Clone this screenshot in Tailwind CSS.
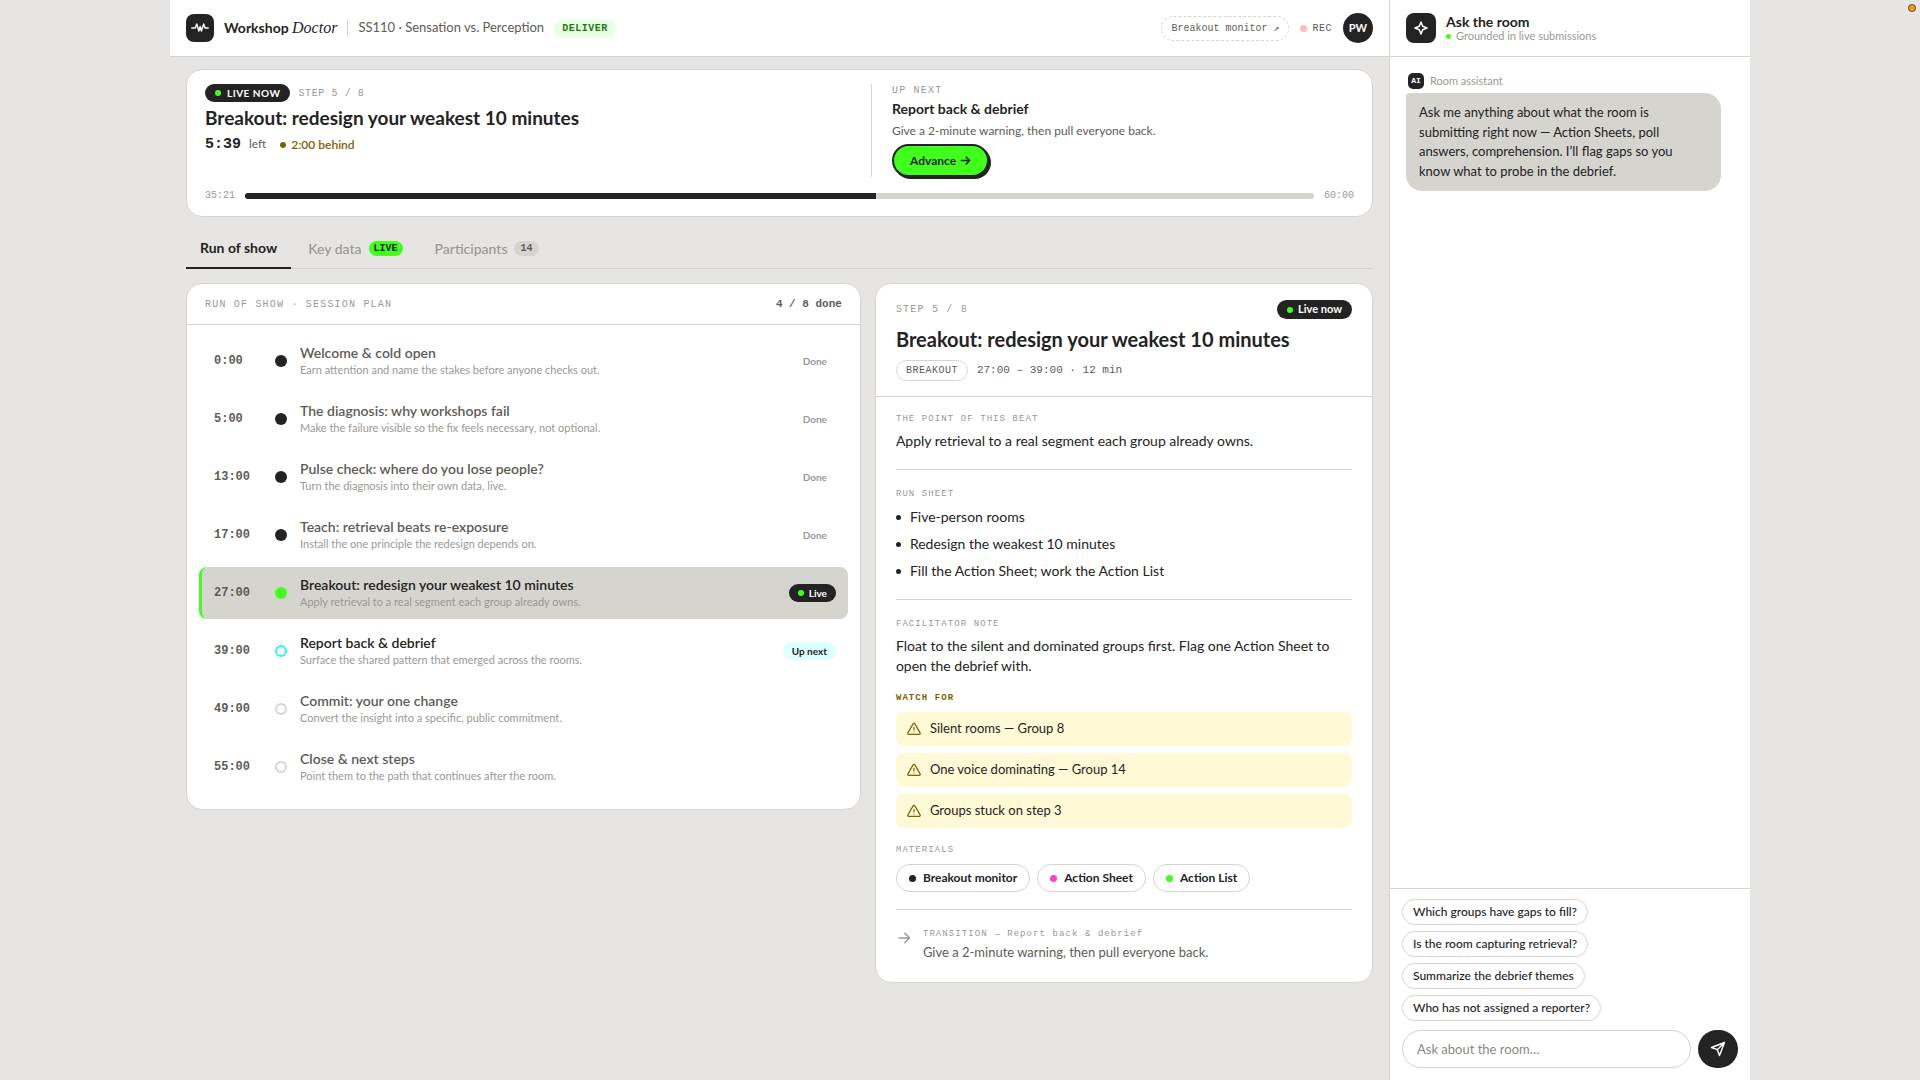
<!DOCTYPE html>
<html lang="en">
<head>
    <meta charset="UTF-8">
    <meta name="viewport" content="width=device-width, initial-scale=1.0">
    <title>Workshop Doctor - SS110 Sensation vs. Perception</title>
    <script src="https://cdn.jsdelivr.net/npm/@tailwindcss/browser@4"></script>
</head>
<body class="bg-[#e6e5e3] text-[#232323] font-['Lato','Liberation_Sans',sans-serif]">
    <!-- Session status light -->
    <span class="fixed top-1 right-1 size-2 rounded-full bg-[#f90] border border-[#5c4a2a]"></span>

    <div class="mx-auto flex h-screen max-w-[1580px]">
        <!-- Main column -->
        <div class="flex min-w-0 flex-1 flex-col border-r border-[#d5d4cf]">
            <header class="flex h-[57px] shrink-0 items-center gap-[10px] border-b border-[#d5d4cf] bg-white px-4">
                <span class="flex size-7 items-center justify-center rounded-lg bg-[#232323] text-white">
                    <svg class="size-[18px]" viewBox="0 0 18 18" fill="none" stroke="currentColor" stroke-width="1.4" stroke-linecap="round" stroke-linejoin="round">
                        <path d="M.8 9h3.400L5.800 5l2 7L9.200 7.500l1.200 4.500 2.300-7L14 9h3.200"></path>
                    </svg>
                </span>
                <span class="text-sm font-bold">Workshop <em class="font-['Liberation_Serif',serif] text-base font-normal">Doctor</em></span>
                <span class="h-[18px] w-px bg-[#d5d4cf]"></span>
                <span class="text-[13px] text-[#5e5b57]">SS110 · Sensation vs. Perception</span>
                <span class="rounded-full bg-[#e8ffe4] px-2 font-['Liberation_Mono',monospace] text-[10px] leading-[19px] font-bold tracking-wider text-[#1f7a14]">DELIVER</span>
                <div class="ml-auto flex items-center gap-[11px]">
                    <a href="#" class="rounded-full border border-dashed border-[#d5d4cf] px-[9px] font-['Liberation_Mono',monospace] text-[10px] leading-[23px] text-[#5e5b57]">Breakout monitor ↗</a>
                    <span class="flex items-center gap-[5px] font-['Liberation_Mono',monospace] text-[10px] tracking-wider text-[#5e5b57]">
                        <span class="size-[7px] rounded-full bg-[#ffbcbc]"></span>REC
                    </span>
                    <span class="flex size-[30px] items-center justify-center rounded-full bg-[#232323] text-[11px] font-bold text-white">PW</span>
                </div>
            </header>

            <main class="flex-1 px-4 py-3">
                <!-- Now / next -->
                <section class="rounded-2xl border border-[#d5d4cf] bg-white px-[18px] pt-[14px] pb-[13px]">
                    <div class="grid grid-cols-[1fr_483px]">
                        <div>
                            <div class="flex items-center gap-2">
                                <span class="flex h-[18px] items-center gap-[6px] rounded-full bg-[#232323] px-[10px] text-[10px] font-bold tracking-wider text-white"><span class="size-[6px] rounded-full bg-[#41ff1c]"></span>LIVE NOW</span>
                                <span class="font-['Liberation_Mono',monospace] text-[10px] tracking-[0.06em] text-[#9a9894]">STEP 5 / 8</span>
                            </div>
                            <h1 class="mt-1 text-[19px] leading-6 font-bold">Breakout: redesign your weakest 10 minutes</h1>
                            <div class="mt-1 flex items-baseline gap-2">
                                <span class="font-['Liberation_Mono',monospace] text-[15px] font-bold">5:39</span>
                                <span class="text-xs text-[#5e5b57]">left</span>
                                <span class="ml-[6px] flex items-center gap-[5px] text-xs font-semibold text-[#7a6200]"><span class="size-[6px] rounded-full bg-[#7a6200]"></span>2:00 behind</span>
                            </div>
                        </div>
                        <div class="border-l border-[#d5d4cf] pl-5">
                            <p class="font-['Liberation_Mono',monospace] text-[10px] leading-[13px] tracking-[0.12em] text-[#9a9894]">UP NEXT</p>
                            <h2 class="mt-[3px] text-sm leading-[18px] font-bold">Report back &amp; debrief</h2>
                            <p class="mt-1 text-xs leading-[18px] text-[#5e5b57]">Give a 2-minute warning, then pull everyone back.</p>
                            <button type="button" class="mt-1 flex h-[33px] items-center gap-1 rounded-full border-2 border-[#232323] bg-[#41ff1c] px-4 text-xs font-bold shadow-[2px_2px_0_#232323]">Advance
                                <svg class="size-[11px]" viewBox="0 0 12 12" fill="none" stroke="currentColor" stroke-width="1.600" stroke-linecap="round" stroke-linejoin="round"><path d="M1.500 6h9M6.800 2.300 10.500 6 6.800 9.700"></path></svg>
                            </button>
                        </div>
                    </div>
                    <div class="mt-3 flex items-center gap-[10px] font-['Liberation_Mono',monospace] text-[10px] leading-[14px] text-[#9a9894]">
                        <span>35:21</span>
                        <div class="h-[6px] flex-1 overflow-hidden rounded-full bg-[#d5d4cf]">
                            <div class="h-full bg-[#232323]" style="width: 59%"></div>
                        </div>
                        <span>60:00</span>
                    </div>
                </section>

                <nav class="mt-3 flex h-10 gap-[2px] border-b border-[#d5d4cf] text-sm text-[#9a9894]">
                    <button type="button" class="-mb-px h-10 border-b-2 border-[#232323] px-[14px] font-bold text-[#232323]">Run of show</button>
                    <button type="button" class="flex items-center gap-[7px] px-[15px] font-medium">Key data <span class="rounded-full bg-[#41ff1c] px-[5px] font-['Liberation_Mono',monospace] text-[10px] leading-[15px] font-bold text-[#232323]">LIVE</span></button>
                    <button type="button" class="flex items-center gap-[7px] px-[15px] font-medium">Participants <span class="rounded-full bg-[#d5d4cf] px-[6px] font-['Liberation_Mono',monospace] text-[10px] leading-[15px] font-bold text-[#5e5b57]">14</span></button>
                </nav>

                <div class="mt-[14px] grid grid-cols-[1.355fr_1fr] items-start gap-[14px]">
                    <!-- Session plan -->
                    <section class="rounded-2xl border border-[#d5d4cf] bg-white">
                        <div class="flex h-[41px] items-center justify-between border-b border-[#d5d4cf] px-[18px] font-['Liberation_Mono',monospace]">
                            <h2 class="text-[10px] tracking-[0.12em] text-[#9a9894]">RUN OF SHOW · SESSION PLAN</h2>
                            <span class="text-[11px] font-bold text-[#5e5b57]">4 / 8 done</span>
                        </div>
                        <ol class="px-3 py-[10px]">
                            <li class="mb-[6px] grid h-[52px] grid-cols-[48px_14px_1fr_auto] items-center gap-3 rounded-lg border-l-3 border-transparent px-3">
                                <span class="font-['Liberation_Mono',monospace] text-xs font-bold text-[#5e5b57]">0:00</span>
                                <span class="mx-auto size-3 rounded-full bg-[#232323]"></span>
                                <div>
                                    <h3 class="text-sm leading-[18px] font-semibold text-[#5e5b57]">Welcome &amp; cold open</h3>
                                    <p class="text-[11px] leading-4 text-[#9a9894]">Earn attention and name the stakes before anyone checks out.</p>
                                </div>
                                <span class="px-[9px] text-[10px] font-bold text-[#9a9894]">Done</span>
                            </li>
                            <li class="mb-[6px] grid h-[52px] grid-cols-[48px_14px_1fr_auto] items-center gap-3 rounded-lg border-l-3 border-transparent px-3">
                                <span class="font-['Liberation_Mono',monospace] text-xs font-bold text-[#5e5b57]">5:00</span>
                                <span class="mx-auto size-3 rounded-full bg-[#232323]"></span>
                                <div>
                                    <h3 class="text-sm leading-[18px] font-semibold text-[#5e5b57]">The diagnosis: why workshops fail</h3>
                                    <p class="text-[11px] leading-4 text-[#9a9894]">Make the failure visible so the fix feels necessary, not optional.</p>
                                </div>
                                <span class="px-[9px] text-[10px] font-bold text-[#9a9894]">Done</span>
                            </li>
                            <li class="mb-[6px] grid h-[52px] grid-cols-[48px_14px_1fr_auto] items-center gap-3 rounded-lg border-l-3 border-transparent px-3">
                                <span class="font-['Liberation_Mono',monospace] text-xs font-bold text-[#5e5b57]">13:00</span>
                                <span class="mx-auto size-3 rounded-full bg-[#232323]"></span>
                                <div>
                                    <h3 class="text-sm leading-[18px] font-semibold text-[#5e5b57]">Pulse check: where do you lose people?</h3>
                                    <p class="text-[11px] leading-4 text-[#9a9894]">Turn the diagnosis into their own data, live.</p>
                                </div>
                                <span class="px-[9px] text-[10px] font-bold text-[#9a9894]">Done</span>
                            </li>
                            <li class="mb-[6px] grid h-[52px] grid-cols-[48px_14px_1fr_auto] items-center gap-3 rounded-lg border-l-3 border-transparent px-3">
                                <span class="font-['Liberation_Mono',monospace] text-xs font-bold text-[#5e5b57]">17:00</span>
                                <span class="mx-auto size-3 rounded-full bg-[#232323]"></span>
                                <div>
                                    <h3 class="text-sm leading-[18px] font-semibold text-[#5e5b57]">Teach: retrieval beats re-exposure</h3>
                                    <p class="text-[11px] leading-4 text-[#9a9894]">Install the one principle the redesign depends on.</p>
                                </div>
                                <span class="px-[9px] text-[10px] font-bold text-[#9a9894]">Done</span>
                            </li>
                            <li class="mb-[6px] grid h-[52px] grid-cols-[48px_14px_1fr_auto] items-center gap-3 rounded-lg border-l-3 border-[#41ff1c] bg-[#d5d4cf] px-3">
                                <span class="font-['Liberation_Mono',monospace] text-xs font-bold text-[#5e5b57]">27:00</span>
                                <span class="mx-auto size-3 rounded-full bg-[#41ff1c]"></span>
                                <div>
                                    <h3 class="text-sm leading-[18px] font-semibold">Breakout: redesign your weakest 10 minutes</h3>
                                    <p class="text-[11px] leading-4 text-[#9a9894]">Apply retrieval to a real segment each group already owns.</p>
                                </div>
                                <span class="flex h-[18px] items-center gap-[5px] rounded-full bg-[#232323] px-[9px] text-[10px] font-bold text-white"><span class="size-[6px] rounded-full bg-[#41ff1c]"></span>Live</span>
                            </li>
                            <li class="mb-[6px] grid h-[52px] grid-cols-[48px_14px_1fr_auto] items-center gap-3 rounded-lg border-l-3 border-transparent px-3">
                                <span class="font-['Liberation_Mono',monospace] text-xs font-bold text-[#5e5b57]">39:00</span>
                                <span class="mx-auto size-3 rounded-full border-2 border-[#1cffff]"></span>
                                <div>
                                    <h3 class="text-sm leading-[18px] font-semibold">Report back &amp; debrief</h3>
                                    <p class="text-[11px] leading-4 text-[#9a9894]">Surface the shared pattern that emerged across the rooms.</p>
                                </div>
                                <span class="rounded-full bg-[#dcffff] px-[9px] text-[10px] leading-[18px] font-bold">Up next</span>
                            </li>
                            <li class="mb-[6px] grid h-[52px] grid-cols-[48px_14px_1fr_auto] items-center gap-3 rounded-lg border-l-3 border-transparent px-3">
                                <span class="font-['Liberation_Mono',monospace] text-xs font-bold text-[#5e5b57]">49:00</span>
                                <span class="mx-auto size-3 rounded-full border-2 border-[#d5d4cf]"></span>
                                <div>
                                    <h3 class="text-sm leading-[18px] font-semibold text-[#5e5b57]">Commit: your one change</h3>
                                    <p class="text-[11px] leading-4 text-[#9a9894]">Convert the insight into a specific, public commitment.</p>
                                </div>
                            </li>
                            <li class="mb-[6px] grid h-[52px] grid-cols-[48px_14px_1fr_auto] items-center gap-3 rounded-lg border-l-3 border-transparent px-3">
                                <span class="font-['Liberation_Mono',monospace] text-xs font-bold text-[#5e5b57]">55:00</span>
                                <span class="mx-auto size-3 rounded-full border-2 border-[#d5d4cf]"></span>
                                <div>
                                    <h3 class="text-sm leading-[18px] font-semibold text-[#5e5b57]">Close &amp; next steps</h3>
                                    <p class="text-[11px] leading-4 text-[#9a9894]">Point them to the path that continues after the room.</p>
                                </div>
                            </li>
                        </ol>
                    </section>

                    <!-- Step detail -->
                    <article class="rounded-2xl border border-[#d5d4cf] bg-white">
                        <div class="border-b border-[#d5d4cf] px-5 pt-4 pb-[15px]">
                            <div class="flex items-center justify-between">
                                <span class="font-['Liberation_Mono',monospace] text-[10px] tracking-[0.12em] text-[#9a9894]">STEP 5 / 8</span>
                                <span class="flex h-[19px] items-center gap-[5px] rounded-full bg-[#232323] px-[10px] text-[11px] font-bold text-white"><span class="size-[6px] rounded-full bg-[#41ff1c]"></span>Live now</span>
                            </div>
                            <h2 class="mt-[7px] text-xl leading-[26px] font-bold">Breakout: redesign your weakest 10 minutes</h2>
                            <div class="mt-2 flex items-center gap-[9px] font-['Liberation_Mono',monospace] text-[#5e5b57]">
                                <span class="rounded-full border border-[#d5d4cf] px-[9px] text-[10px] leading-[19px] tracking-wider">BREAKOUT</span>
                                <span class="text-[11px]">27:00 – 39:00 · 12 min</span>
                            </div>
                        </div>
                        <div class="px-5 pt-4 pb-5">
                            <h3 class="font-['Liberation_Mono',monospace] text-[9px] leading-3 tracking-[0.12em] text-[#9a9894]">THE POINT OF THIS BEAT</h3>
                            <p class="mt-[6px] text-sm leading-5">Apply retrieval to a real segment each group already owns.</p>

                            <h3 class="mt-[18px] border-t border-[#d5d4cf] pt-[18px] font-['Liberation_Mono',monospace] text-[9px] leading-3 tracking-[0.12em] text-[#9a9894]">RUN SHEET</h3>
                            <ul class="mt-[7px] space-y-[7px] text-sm leading-5">
                                <li class="flex items-center gap-[9px]"><span class="size-[5px] rounded-full bg-[#232323]"></span>Five-person rooms</li>
                                <li class="flex items-center gap-[9px]"><span class="size-[5px] rounded-full bg-[#232323]"></span>Redesign the weakest 10 minutes</li>
                                <li class="flex items-center gap-[9px]"><span class="size-[5px] rounded-full bg-[#232323]"></span>Fill the Action Sheet; work the Action List</li>
                            </ul>

                            <h3 class="mt-[18px] border-t border-[#d5d4cf] pt-[18px] font-['Liberation_Mono',monospace] text-[9px] leading-3 tracking-[0.12em] text-[#9a9894]">FACILITATOR NOTE</h3>
                            <p class="mt-[6px] text-sm leading-5">Float to the silent and dominated groups first. Flag one Action Sheet to open the debrief with.</p>

                            <h3 class="mt-4 font-['Liberation_Mono',monospace] text-[9px] leading-3 font-bold tracking-[0.12em] text-[#7a6200]">WATCH FOR</h3>
                            <ul class="mt-2 space-y-[7px] text-[13px] text-[#232323]">
                                <li class="flex h-[34px] items-center gap-[9px] rounded-lg bg-[#fff9d6] px-[11px]">
                                    <svg class="size-[14px] text-[#7a6200]" viewBox="0 0 14 14" fill="none" stroke="currentColor" stroke-width="1.200" stroke-linecap="round" stroke-linejoin="round"><path d="M6.100 1.900.9 10.900a1 1 0 0 0 .9 1.500h10.400a1 1 0 0 0 .9-1.500L7.900 1.900a1 1 0 0 0-1.800 0zM7 5.300v2.600M7 10v.1"></path></svg>
                                    Silent rooms — Group 8
                                </li>
                                <li class="flex h-[34px] items-center gap-[9px] rounded-lg bg-[#fff9d6] px-[11px]">
                                    <svg class="size-[14px] text-[#7a6200]" viewBox="0 0 14 14" fill="none" stroke="currentColor" stroke-width="1.200" stroke-linecap="round" stroke-linejoin="round"><path d="M6.100 1.900.9 10.900a1 1 0 0 0 .9 1.500h10.400a1 1 0 0 0 .9-1.500L7.900 1.900a1 1 0 0 0-1.800 0zM7 5.300v2.600M7 10v.1"></path></svg>
                                    One voice dominating — Group 14
                                </li>
                                <li class="flex h-[34px] items-center gap-[9px] rounded-lg bg-[#fff9d6] px-[11px]">
                                    <svg class="size-[14px] text-[#7a6200]" viewBox="0 0 14 14" fill="none" stroke="currentColor" stroke-width="1.200" stroke-linecap="round" stroke-linejoin="round"><path d="M6.100 1.900.9 10.900a1 1 0 0 0 .9 1.500h10.400a1 1 0 0 0 .9-1.500L7.900 1.900a1 1 0 0 0-1.800 0zM7 5.300v2.600M7 10v.1"></path></svg>
                                    Groups stuck on step 3
                                </li>
                            </ul>

                            <h3 class="mt-4 font-['Liberation_Mono',monospace] text-[9px] leading-3 tracking-[0.12em] text-[#9a9894]">MATERIALS</h3>
                            <div class="mt-2 flex flex-wrap gap-[7px] text-xs font-bold">
                                <a href="#" class="flex h-7 items-center gap-[7px] rounded-full border border-[#d5d4cf] px-3"><span class="size-[7px] rounded-full bg-[#232323]"></span>Breakout monitor</a>
                                <a href="#" class="flex h-7 items-center gap-[7px] rounded-full border border-[#d5d4cf] px-3"><span class="size-[7px] rounded-full bg-[#ff3fd0]"></span>Action Sheet</a>
                                <a href="#" class="flex h-7 items-center gap-[7px] rounded-full border border-[#d5d4cf] px-3"><span class="size-[7px] rounded-full bg-[#41ff1c]"></span>Action List</a>
                            </div>

                            <div class="mt-[17px] flex gap-[11px] border-t border-[#d5d4cf] pt-[18px]">
                                <svg class="mt-[2px] size-4 shrink-0 text-[#9a9894]" viewBox="0 0 16 16" fill="none" stroke="currentColor" stroke-width="1.500" stroke-linecap="round" stroke-linejoin="round"><path d="M3 8h10.500M8.800 3.300 13.500 8l-4.700 4.700"></path></svg>
                                <div>
                                    <h3 class="font-['Liberation_Mono',monospace] text-[9px] leading-3 tracking-[0.12em] text-[#9a9894]">TRANSITION → Report back &amp; debrief</h3>
                                    <p class="mt-[2px] text-[13px] leading-5 text-[#5e5b57]">Give a 2-minute warning, then pull everyone back.</p>
                                </div>
                            </div>
                        </div>
                    </article>
                </div>
            </main>
        </div>

        <!-- Room assistant -->
        <aside class="flex w-[360px] shrink-0 flex-col bg-white">
            <header class="flex h-[57px] shrink-0 items-center gap-[10px] border-b border-[#d5d4cf] px-4">
                <span class="flex size-[30px] items-center justify-center rounded-lg bg-[#232323] text-white">
                    <svg class="size-4" viewBox="0 0 16 16" fill="none" stroke="currentColor" stroke-width="1.500" stroke-linejoin="round"><path d="M8 2 9.700 6.300 14 8 9.700 9.700 8 14 6.300 9.700 2 8l4.300-1.700z"></path></svg>
                </span>
                <div>
                    <h2 class="text-sm leading-4 font-bold">Ask the room</h2>
                    <p class="flex items-center gap-[5px] text-[11px] leading-3 text-[#9a9894]"><span class="size-[5px] rounded-full bg-[#41ff1c]"></span>Grounded in live submissions</p>
                </div>
            </header>

            <div class="flex-1 overflow-y-auto p-4">
                <div class="flex items-center gap-[6px] px-[2px] text-[11px] leading-4 text-[#9a9894]">
                    <span class="flex size-4 items-center justify-center rounded-[5px] bg-[#232323] font-['Liberation_Mono',monospace] text-[8px] font-bold text-white">AI</span>
                    Room assistant
                </div>
                <p class="mt-1 max-w-[315px] rounded-2xl rounded-tl-sm bg-[#d5d4cf] py-[10px] pr-5 pl-[13px] text-[13px] leading-normal">Ask me anything about what the room is submitting right now — Action Sheets, poll answers, comprehension. I’ll flag gaps so you know what to probe in the debrief.</p>
            </div>

            <div class="border-t border-[#d5d4cf] px-3 pt-[10px] pb-3">
                <div class="flex flex-col items-start gap-[6px] text-xs font-medium">
                    <button type="button" class="h-[26px] rounded-full border border-[#d5d4cf] px-[10px]">Which groups have gaps to fill?</button>
                    <button type="button" class="h-[26px] rounded-full border border-[#d5d4cf] px-[10px]">Is the room capturing retrieval?</button>
                    <button type="button" class="h-[26px] rounded-full border border-[#d5d4cf] px-[10px]">Summarize the debrief themes</button>
                    <button type="button" class="h-[26px] rounded-full border border-[#d5d4cf] px-[10px]">Who has not assigned a reporter?</button>
                </div>
                <form class="mt-[9px] flex gap-[7px]">
                    <input type="text" aria-label="Ask about the room" placeholder="Ask about the room…" class="h-[38px] min-w-0 flex-1 rounded-full border border-[#d5d4cf] px-[14px] text-[13px] placeholder:text-[#8a8885]">
                    <button type="submit" aria-label="Send" class="flex h-[38px] w-10 items-center justify-center rounded-full bg-[#232323] text-white">
                        <svg class="size-4" viewBox="0 0 16 16" fill="none" stroke="currentColor" stroke-width="1.400" stroke-linecap="round" stroke-linejoin="round"><path d="M14.500 1.500 1.500 6.500l5.800 2.200L9.500 14.500zM14.500 1.500 7.300 8.700"></path></svg>
                    </button>
                </form>
            </div>
        </aside>
    </div>
</body>
</html>
